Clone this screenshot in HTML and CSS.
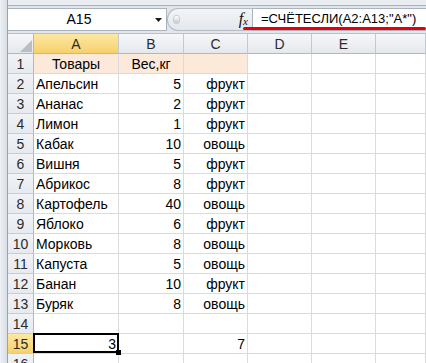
FILE: index.html
```html
<!doctype html>
<html>

<head>
    <meta charset="UTF-8">
    <title>СЧЁТЕСЛИ</title>
    <link rel="stylesheet" href="styles.css">
</head>

<body>
<div class="window">
    <div class="frame"></div>
    <div class="main">
        <div class="ribbon"></div>
        <div class="formula-bar">
            <div class="name-box">
                <span class="name">A15</span>
                <svg class="arrow" width="7" height="4" viewBox="0 0 7 4"><polygon points="0,0 7,0 3.5,4" fill="#1a1a1a"/></svg>
            </div>
            <div class="fx-box">
                <span class="grip"></span>
                <span class="fx">f<sub>x</sub></span>
            </div>
            <div class="formula">=СЧЁТЕСЛИ(A2:A13;"A*")</div>
            <div class="mark"></div>
        </div>
        <div class="sheet">
            <div class="row head">
                <div class="corner"><svg width="12" height="12" viewBox="0 0 12 12"><polygon points="12,0 12,12 0,12" fill="#b9bec5"/></svg></div>
                <div class="ch sel">A</div><div class="ch">B</div><div class="ch">C</div><div class="ch">D</div><div class="ch">E</div><div class="ch"></div>
            </div>
            <div class="row">
                <div class="rh">1</div>
                <div class="c fill t">Товары</div><div class="c fill t">Вес,кг</div><div class="c fill"></div><div class="c"></div><div class="c"></div><div class="c"></div>
            </div>
            <div class="row">
                <div class="rh">2</div>
                <div class="c">Апельсин</div><div class="c n">5</div><div class="c n">фрукт</div><div class="c"></div><div class="c"></div><div class="c"></div>
            </div>
            <div class="row">
                <div class="rh">3</div>
                <div class="c">Ананас</div><div class="c n">2</div><div class="c n">фрукт</div><div class="c"></div><div class="c"></div><div class="c"></div>
            </div>
            <div class="row">
                <div class="rh">4</div>
                <div class="c">Лимон</div><div class="c n">1</div><div class="c n">фрукт</div><div class="c"></div><div class="c"></div><div class="c"></div>
            </div>
            <div class="row">
                <div class="rh">5</div>
                <div class="c">Кабак</div><div class="c n">10</div><div class="c n">овощь</div><div class="c"></div><div class="c"></div><div class="c"></div>
            </div>
            <div class="row">
                <div class="rh">6</div>
                <div class="c">Вишня</div><div class="c n">5</div><div class="c n">фрукт</div><div class="c"></div><div class="c"></div><div class="c"></div>
            </div>
            <div class="row">
                <div class="rh">7</div>
                <div class="c">Абрикос</div><div class="c n">8</div><div class="c n">фрукт</div><div class="c"></div><div class="c"></div><div class="c"></div>
            </div>
            <div class="row">
                <div class="rh">8</div>
                <div class="c">Картофель</div><div class="c n">40</div><div class="c n">овощь</div><div class="c"></div><div class="c"></div><div class="c"></div>
            </div>
            <div class="row">
                <div class="rh">9</div>
                <div class="c">Яблоко</div><div class="c n">6</div><div class="c n">фрукт</div><div class="c"></div><div class="c"></div><div class="c"></div>
            </div>
            <div class="row">
                <div class="rh">10</div>
                <div class="c">Морковь</div><div class="c n">8</div><div class="c n">овощь</div><div class="c"></div><div class="c"></div><div class="c"></div>
            </div>
            <div class="row">
                <div class="rh">11</div>
                <div class="c">Капуста</div><div class="c n">5</div><div class="c n">овощь</div><div class="c"></div><div class="c"></div><div class="c"></div>
            </div>
            <div class="row">
                <div class="rh">12</div>
                <div class="c">Банан</div><div class="c n">10</div><div class="c n">фрукт</div><div class="c"></div><div class="c"></div><div class="c"></div>
            </div>
            <div class="row">
                <div class="rh">13</div>
                <div class="c">Буряк</div><div class="c n">8</div><div class="c n">овощь</div><div class="c"></div><div class="c"></div><div class="c"></div>
            </div>
            <div class="row">
                <div class="rh">14</div>
                <div class="c"></div><div class="c"></div><div class="c"></div><div class="c"></div><div class="c"></div><div class="c"></div>
            </div>
            <div class="row">
                <div class="rh sel">15</div>
                <div class="c n active">3<span class="handle"></span></div><div class="c"></div><div class="c n">7</div><div class="c"></div><div class="c"></div><div class="c"></div>
            </div>
            <div class="row">
                <div class="rh">16</div>
                <div class="c"></div><div class="c"></div><div class="c"></div><div class="c"></div><div class="c"></div><div class="c"></div>
            </div>
        </div>
    </div>
</div>
</body>

</html>
```

FILE: styles.css
```css
body {
    margin: 0;
    font-family: "Liberation Sans", Arial, sans-serif;
    font-size: 14px;
    color: #000;
    background-color: #fff;
    overflow: hidden;
}

.window {
    display: flex;
    height: 363px;
    overflow: hidden;
}

.frame {
    width: 7px;
    flex: none;
    border-right: 1px solid #9aa3ae;
    background: linear-gradient(to right, #eef1f5, #d8dee6);
}

.main {
    flex: 1;
    min-width: 0;
}

.ribbon {
    height: 5px;
    background-color: #e9edf2;
    border-bottom: 1px solid #a9b1ba;
}

.formula-bar {
    position: relative;
    display: flex;
    align-items: flex-start;
    height: 28px;
    box-sizing: border-box;
    padding-top: 2px;
    background-color: #e2e6eb;
    border-bottom: 1px solid #b9c0c8;
}

.name-box {
    width: 159px;
    height: 23px;
    box-sizing: border-box;
    display: flex;
    align-items: center;
    background-color: #fff;
    border: 1px solid #a9b3be;
    border-left: none;
}

.name {
    width: 142px;
    text-align: center;
    line-height: 21px;
}

.arrow {
    margin-left: 5px;
}

.fx-box {
    width: 85px;
    height: 23px;
    box-sizing: border-box;
    display: flex;
    align-items: center;
    justify-content: space-between;
    border: 1px solid #b3bbc5;
    border-right: none;
    border-radius: 11px 0 0 11px;
    background: linear-gradient(#f3f5f7, #e3e7ec);
}

.grip {
    width: 5px;
    height: 7px;
    margin-left: 5px;
    border-radius: 3px;
    background: linear-gradient(#ffffff, #c3c9d1);
    border: 1px solid #c8ced5;
}

.fx {
    font-family: "Liberation Serif", serif;
    font-style: italic;
    font-size: 16px;
    line-height: 21px;
    color: #111;
    margin-right: 4px;
}

.fx sub {
    font-size: 11px;
    vertical-align: -1px;
}

.formula {
    flex: 1;
    height: 23px;
    box-sizing: border-box;
    padding-left: 8px;
    background-color: #fff;
    border: 1px solid #a9b3be;
    border-right: none;
    font-size: 13px;
    line-height: 20px;
    white-space: nowrap;
}

.mark {
    position: absolute;
    left: 235px;
    top: 21px;
    width: 183px;
    height: 3px;
    border-radius: 2px;
    background-color: #e0000f;
}

.row {
    display: grid;
    grid-template-columns: 26px 85px 65px 64px 64px 64px 1fr;
    height: 20px;
}

.row > div {
    box-sizing: border-box;
    border-right: 1px solid #d9dbdd;
    border-bottom: 1px solid #d9dbdd;
    white-space: nowrap;
    overflow: hidden;
}

.c {
    padding: 1px 2px 0 2px;
    line-height: 18px;
}

.c.n {
    text-align: right;
}

.c.t {
    text-align: center;
}

.c.fill {
    background-color: #fde9d9;
}

.c.active {
    position: relative;
    overflow: visible;
}

.c.active::after {
    content: "";
    position: absolute;
    left: -1px;
    right: -1px;
    top: -1px;
    bottom: 0;
    border: 2px solid #000;
}

.handle {
    position: absolute;
    right: -3px;
    bottom: -2px;
    width: 5px;
    height: 5px;
    background-color: #000;
    z-index: 2;
}

.row.head > div {
    background: linear-gradient(#f6f7f9, #e4e8ed);
    border-right-color: #c3c9d1;
    border-bottom-color: #b2b8c0;
    color: #2b2b2b;
    text-align: center;
    line-height: 20px;
}

.row.head > .corner {
    display: flex;
    align-items: flex-end;
    justify-content: flex-end;
    padding: 0 1px 1px 0;
    border-right-color: #b2b8c0;
}

.rh {
    background: linear-gradient(#f1f3f6, #e6e9ee);
    border-right-color: #b2b8c0 !important;
    border-bottom-color: #c8cdd4 !important;
    color: #2b2b2b;
    text-align: center;
    padding-top: 1px;
    line-height: 18px;
}

.row.head > .ch.sel,
.rh.sel {
    background: linear-gradient(#fde8a4, #f7d06b);
}
```
